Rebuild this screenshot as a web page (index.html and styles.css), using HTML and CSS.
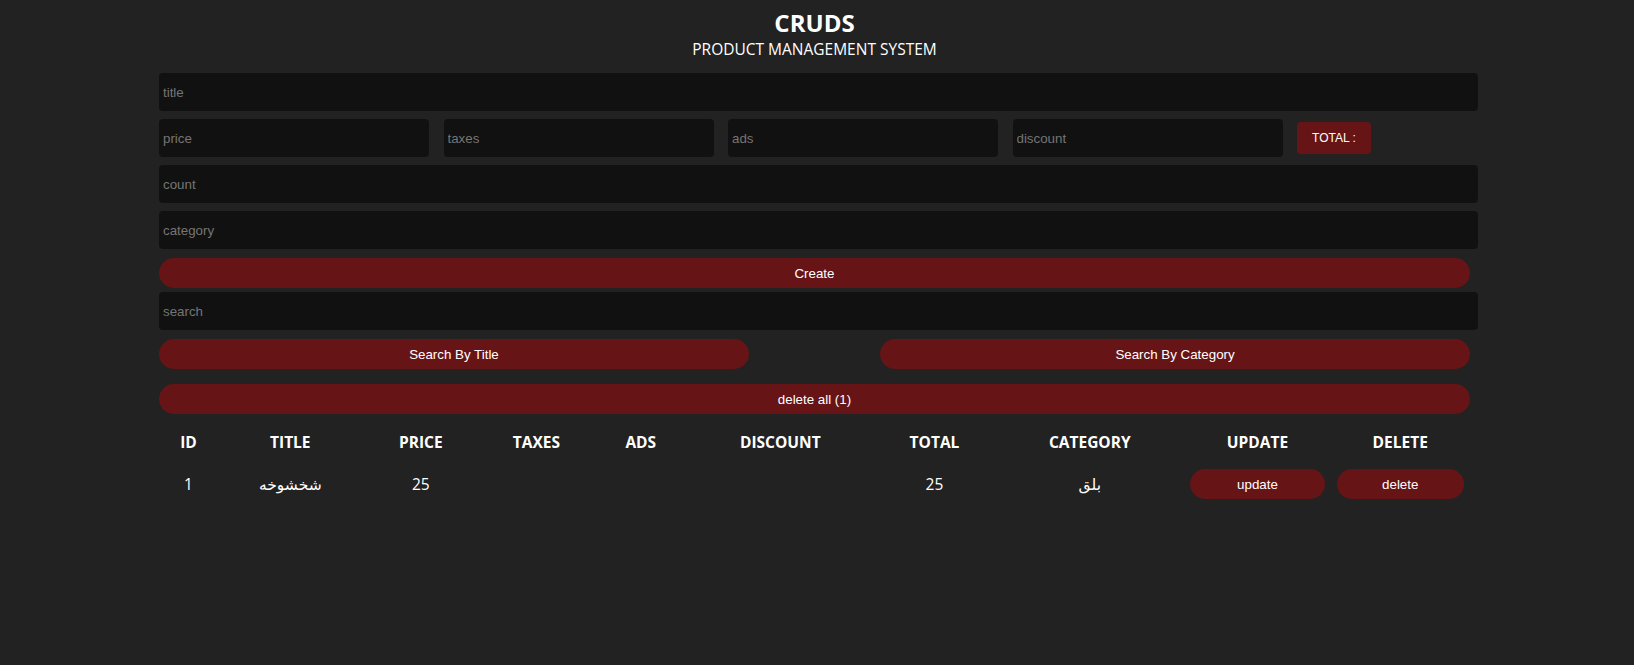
FILE: index.html
```html
<!DOCTYPE html>
<html lang="en">
<head>
<meta charset="utf-8">
<title>CRUDS</title>
<link rel="stylesheet" href="styles.css">
</head>
<body>
<div class="crud">
  <div class="head">
    <h2 class="brand">CRUDS</h2>
    <p class="sub">product management system</p>
  </div>
  <div class="inputs">
    <input class="field" type="text" placeholder="title">
    <div class="price">
      <input class="field small" type="number" placeholder="price">
      <input class="field small" type="number" placeholder="taxes">
      <input class="field small" type="number" placeholder="ads">
      <input class="field small" type="number" placeholder="discount">
      <small class="total">TOTAL : </small>
    </div>
    <input class="field" type="number" placeholder="count">
    <input class="field" type="text" placeholder="category">
    <button class="btn create">Create</button>
  </div>
  <div class="outputs">
    <input class="field search" type="text" placeholder="search">
    <div class="btn-search">
      <button class="btn half">Search By Title</button>
      <button class="btn half">Search By Category</button>
    </div>
    <div class="delete-all">
      <button class="btn">delete all (1)</button>
    </div>
    <table class="table">
      <colgroup>
        <col class="c-id"><col class="c-title"><col class="c-price"><col class="c-taxes"><col class="c-ads">
        <col class="c-discount"><col class="c-total"><col class="c-category"><col class="c-update"><col class="c-delete">
      </colgroup>
      <thead>
        <tr>
          <th>id</th><th>title</th><th>price</th><th>taxes</th><th>ads</th>
          <th>discount</th><th>total</th><th>category</th><th>update</th><th>delete</th>
        </tr>
      </thead>
      <tbody>
        <tr>
          <td>1</td><td>شخشوخه</td><td>25</td><td></td><td></td>
          <td></td><td>25</td><td>بلق</td>
          <td><button class="btn">update</button></td>
          <td><button class="btn">delete</button></td>
        </tr>
      </tbody>
    </table>
  </div>
</div>
</body>
</html>
```

FILE: styles.css
```css
* {
  margin: 0;
  padding: 0;
}

body {
  background: #222222;
  color: #ffffff;
  font-family: "Open Sans", "DejaVu Sans", sans-serif;
  margin: 0;
}

.crud {
  width: 1311px;
  margin: 0 0 0 159px;
}

.head {
  text-align: center;
  text-transform: uppercase;
}

.brand {
  font-size: 24px;
  line-height: 24px;
  font-weight: 700;
  padding-top: 11px;
}

.sub {
  font-size: 15.5px;
  line-height: 16px;
  margin-top: 6px;
  margin-bottom: 16px;
}

.field {
  display: block;
  width: 100%;
  height: 30px;
  padding: 4px;
  box-sizing: content-box;
  border: none;
  outline: none;
  background: #111111;
  border-radius: 4px;
  color: #ffffff;
  font: 13.333px "Liberation Sans", Arial, sans-serif;
  margin-bottom: 8px;
  -moz-appearance: textfield;
}

.field::placeholder {
  color: #757575;
}

.field::-webkit-outer-spin-button,
.field::-webkit-inner-spin-button {
  -webkit-appearance: none;
  margin: 0;
}

.price {
  display: flex;
  align-items: center;
  gap: 14.5px;
  height: 38px;
  margin-bottom: 8px;
}

.price .small {
  width: 262px;
  margin: 0;
  flex: 0 0 auto;
}

.total {
  background: #671417;
  color: #ffffff;
  font: 12px "Liberation Sans", Arial, sans-serif;
  height: 32px;
  width: 74px;
  box-sizing: border-box;
  border-radius: 4px;
  display: flex;
  align-items: center;
  justify-content: center;
  margin-top: 0;
}

.btn {
  display: block;
  width: 100%;
  height: 30px;
  border: none;
  cursor: pointer;
  background: #671417;
  color: #ffffff;
  border-radius: 20px;
  font: 13.333px "Liberation Sans", Arial, sans-serif;
}

.create {
  margin-top: 9px;
}

.search {
  margin-top: 4px;
  margin-bottom: 9px;
}

.btn-search {
  display: flex;
  justify-content: space-between;
}

.btn-search .half {
  width: 45%;
}

.delete-all {
  margin-top: 15px;
}

.table {
  width: 100%;
  table-layout: fixed;
  border-spacing: 2px;
  text-align: center;
  margin-top: 10px;
}

.table th {
  text-transform: uppercase;
  font-size: 15.5px;
  font-weight: 700;
  padding: 5px;
}

.table td {
  font-size: 15.5px;
  padding: 9px 5px 5px;
}

.c-id { width: 55px; }
.c-title { width: 144.6px; }
.c-price { width: 112.4px; }
.c-taxes { width: 114.8px; }
.c-ads { width: 90px; }
.c-discount { width: 185px; }
.c-total { width: 119.4px; }
.c-category { width: 187.2px; }
.c-update { width: 144.2px; }
.c-delete { width: 137.4px; }
```
